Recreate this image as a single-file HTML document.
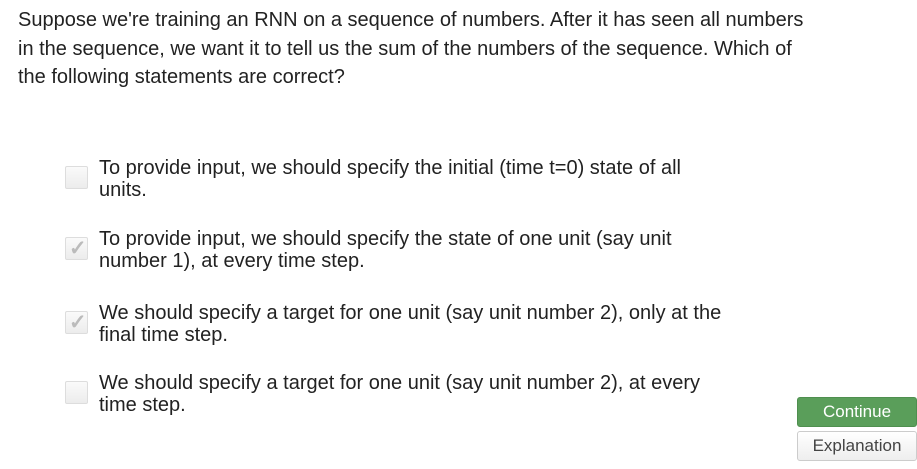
<!DOCTYPE html>
<html><head><style>
body{margin:0;width:917px;height:469px;background:#fff;font-family:"Liberation Sans",sans-serif;color:#222;position:relative;overflow:hidden}
.q{position:absolute;left:18px;top:6px;white-space:nowrap;font-size:20px;line-height:28.5px}
.o{position:absolute;left:99px;white-space:nowrap;font-size:20px;line-height:22px}
.cb{position:absolute;left:65px;width:21px;height:21px;border:1px solid #ddd;border-radius:2px;background:linear-gradient(#fafafa,#ececec)}
.cb span{position:absolute;left:3px;top:0;color:#bbb;font-size:21px;line-height:22px;font-weight:bold}
.btn{position:absolute;left:797px;width:118px;height:28px;border-radius:3px;font-size:17px;text-align:center;line-height:28px}
</style></head><body>
<div class="q">Suppose we're training an RNN on a sequence of numbers. After it has seen all numbers<br>in the sequence, we want it to tell us the sum of the numbers of the sequence. Which of<br>the following statements are correct?</div>
<div class="cb" style="top:166px"></div>
<div class="o" style="top:157px">To provide input, we should specify the initial (time t=0) state of all<br>units.</div>
<div class="cb" style="top:237px"><span>✓</span></div>
<div class="o" style="top:228px">To provide input, we should specify the state of one unit (say unit<br>number 1), at every time step.</div>
<div class="cb" style="top:311px"><span>✓</span></div>
<div class="o" style="top:302px">We should specify a target for one unit (say unit number 2), only at the<br>final time step.</div>
<div class="cb" style="top:381px"></div>
<div class="o" style="top:372px">We should specify a target for one unit (say unit number 2), at every<br>time step.</div>
<div class="btn" style="top:397px;background:#5a9e5a;border:1px solid #4f8f4f;color:#fff">Continue</div>
<div class="btn" style="top:431px;background:linear-gradient(#fff,#eee);border:1px solid #ccc;color:#444">Explanation</div>
</body></html>
